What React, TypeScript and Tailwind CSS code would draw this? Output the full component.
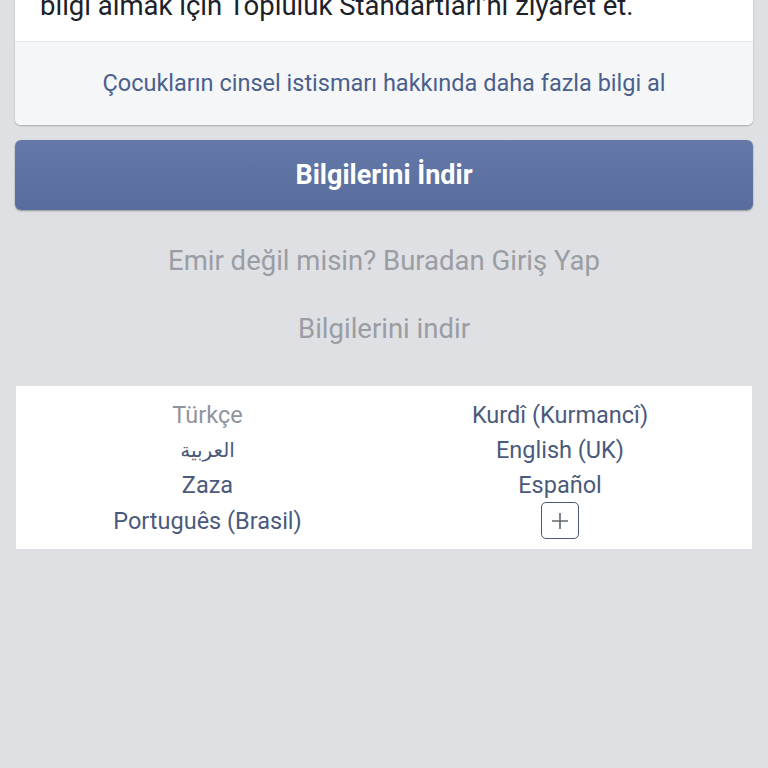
export default function App() {
  const langs: Array<[string, string]> = [
    ["Türkçe", "Kurdî (Kurmancî)"],
    ["العربية", "English (UK)"],
    ["Zaza", "Español"],
    ["Português (Brasil)", ""],
  ];

  return (
    <div
      className="h-[768px] w-[768px] overflow-hidden bg-[#dfe0e4]"
      style={{ fontFamily: "Roboto, 'Noto Sans', sans-serif" }}
    >
      <div className="mx-[15px] -mt-[14px] overflow-hidden rounded-b-md bg-white shadow-[0_1px_2px_rgba(0,0,0,0.25)]">
        <div className="border-b border-[#e5e6e9] px-[25px] pb-[15px] text-[27.5px] leading-[40px] text-[#1d2129]">
          bilgi almak için Topluluk Standartları'nı ziyaret et.
        </div>
        <div className="flex h-[83px] items-center justify-center bg-[#f5f6f7] text-[23.5px] text-[#4b5f8c]">
          Çocukların cinsel istismarı hakkında daha fazla bilgi al
        </div>
      </div>

      <button
        type="button"
        className="mx-[15px] mt-[15px] flex h-[70px] w-[738px] items-center justify-center rounded-md bg-gradient-to-b from-[#6479a9] to-[#586d9b] text-[27px] font-bold text-white shadow-[0_1px_2px_rgba(0,0,0,0.35)]"
      >
        Bilgilerini İndir
      </button>

      <div className="mt-[33px] text-center text-[27.5px] leading-[36px] text-[#9a9da3]">
        Emir değil misin? Buradan Giriş Yap
      </div>
      <div className="mt-[32px] text-center text-[27.5px] leading-[36px] text-[#9a9da3]">
        Bilgilerini indir
      </div>

      <div className="mx-[16px] mt-[39px] bg-white pb-[12px] pt-[11px]">
        {langs.map(([left, right], i) => (
          <div key={i} className="grid h-[35px] grid-cols-2 items-center text-[23.5px] leading-[28px]">
            <div className={`pl-[15px] text-center ${i === 0 ? "text-[#90949c]" : "text-[#4b5a7c]"}`}>
              {i === 1 ? (
                <span style={{ fontFamily: "'DejaVu Sans', sans-serif" }} className="text-[20px]">
                  {left}
                </span>
              ) : (
                left
              )}
            </div>
            <div className="flex justify-center pr-[16px] text-[#4b5a7c]">
              {right ? (
                right
              ) : (
                <span className="flex h-[37px] w-[38px] items-center justify-center rounded-[5px] border-[1.5px] border-[#4b5a7c]">
                  <svg width="18" height="18" viewBox="0 0 18 18">
                    <path d="M9 1v16M1 9h16" stroke="#606770" strokeWidth="1.6" />
                  </svg>
                </span>
              )}
            </div>
          </div>
        ))}
      </div>
    </div>
  );
}
